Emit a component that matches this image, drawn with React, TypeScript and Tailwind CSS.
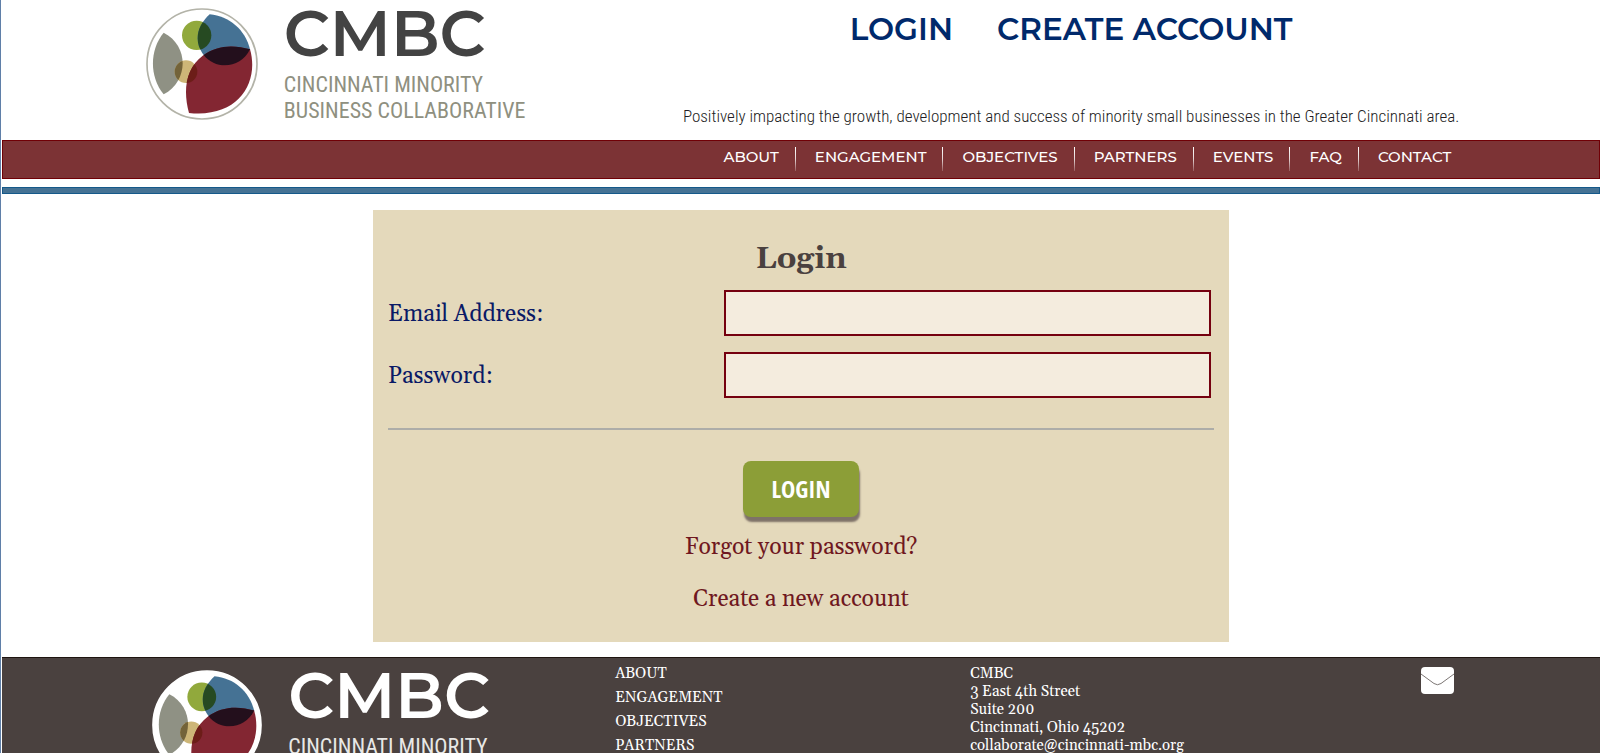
import React from "react";

const navItems = ["ABOUT", "ENGAGEMENT", "OBJECTIVES", "PARTNERS", "EVENTS", "FAQ", "CONTACT"];

function LogoMark({ className, ring }: { className: string; ring: string }) {
  return (
    <svg viewBox="45 24 336 336" className={className} aria-hidden="true">
      <defs>
        <clipPath id="blueLens">
          <path d="M236 43C295 48 343 90 357 148C330 205 255 212 218 165C188 125 196 80 236 43Z" />
        </clipPath>
        <clipPath id="greyLens">
          <path d="M98 98C175 137 173 243 98 283C55 230 55 150 98 98Z" />
        </clipPath>
        <clipPath id="redLens">
          <path d="M357 148C385 245 325 355 174 339C155 270 165 205 215 167C258 134 310 134 357 148Z" />
        </clipPath>
      </defs>
      <circle cx="213" cy="192" r="165" fill="#fff" stroke={ring} strokeWidth="5" />
      <path d="M98 98C175 137 173 243 98 283C55 230 55 150 98 98Z" fill="#8f9184" />
      <circle cx="197" cy="106" r="44" fill="#91a93c" />
      <circle cx="165" cy="215" r="34" fill="#cdb677" />
      <path d="M236 43C295 48 343 90 357 148C330 205 255 212 218 165C188 125 196 80 236 43Z" fill="#457294" />
      <path d="M357 148C385 245 325 355 174 339C155 270 165 205 215 167C258 134 310 134 357 148Z" fill="#832632" />
      <circle cx="197" cy="106" r="44" fill="#264a22" clipPath="url(#blueLens)" />
      <circle cx="165" cy="215" r="34" fill="#736339" clipPath="url(#greyLens)" />
      <circle cx="165" cy="215" r="34" fill="#6c1d18" clipPath="url(#redLens)" />
      <path
        d="M357 148C385 245 325 355 174 339C155 270 165 205 215 167C258 134 310 134 357 148Z"
        fill="#230f1c"
        clipPath="url(#blueLens)"
      />
    </svg>
  );
}

function Logo({ light = false }: { light?: boolean }) {
  return (
    <a href="#home" className="flex gap-[26px]">
      <LogoMark className={light ? "size-[110px] shrink-0" : "size-28 shrink-0"} ring={light ? "#fff" : "#b3b3a8"} />
      <span className="flex flex-col whitespace-nowrap">
        <span
          className={`font-['Montserrat','Lato',sans-serif] text-[64px] leading-[50px] font-semibold ${
            light ? "text-white" : "text-[#434343]"
          }`}
        >
          CMBC
        </span>
        <span
          className={`mt-3.5 font-['Roboto_Condensed','Roboto',sans-serif] text-[22px] leading-[26px] ${
            light ? "text-[#e8e8e6]" : "text-[#8f9080]"
          }`}
        >
          CINCINNATI MINORITY
          <br />
          BUSINESS COLLABORATIVE
        </span>
      </span>
    </a>
  );
}

function Field({ id, label, type }: { id: string; label: string; type: string }) {
  return (
    <div className="flex items-center justify-between pr-[3px]">
      <label htmlFor={id} className="pt-1 text-[23px] leading-8 text-[#0a1a66]">
        {label}
      </label>
      <input
        id={id}
        name={id}
        type={type}
        className="h-[46px] w-[487px] max-w-[60%] border-2 border-[#75000f] bg-[#f4ecde] px-3 text-xl outline-none"
      />
    </div>
  );
}

export default function App() {
  return (
    <div className="min-h-screen border-l border-[#5f7fa8] bg-white pl-px font-['Georgia','Gelasio','Liberation_Serif',serif]">
      <header>
        <div className="flex h-[140px] justify-between pt-2 pr-[8.8%] pl-[9%]">
          <Logo />
          <div className="flex flex-col items-center justify-between pb-2">
            <div className="flex gap-11 font-['Montserrat','Inter',sans-serif] text-[31px] leading-[42px] font-semibold text-[#00296b]">
              <a href="#login">LOGIN</a>
              <a href="#create">CREATE ACCOUNT</a>
            </div>
            <p className="font-['Roboto_Condensed','Roboto',sans-serif] text-[17px] leading-8 font-light whitespace-nowrap text-[#221c22]">
              Positively impacting the growth, development and success of minority small businesses in the Greater
              Cincinnati area.
            </p>
          </div>
        </div>
        <nav className="flex h-[39px] justify-end border border-[#700006] bg-[#7c3335] px-[9%] pt-1.5">
          <ul className="flex pr-1 font-['Montserrat','Inter',sans-serif] text-[15px] leading-5 font-medium text-white">
            {navItems.map((item, i) => (
              <li key={item} className="flex">
                {i > 0 && (
                  <span className="mr-[19px] ml-4 h-6 w-px bg-linear-to-b from-white via-white/80 to-white/20" />
                )}
                <a href={`#${item.toLowerCase()}`}>{item}</a>
              </li>
            ))}
          </ul>
        </nav>
        <div className="mt-2 h-[7px] border border-[#15598a] bg-[#457294]" />
      </header>

      <main className="pt-4 pb-[15px]">
        <form
          className="mx-auto w-full max-w-[856px] bg-[#e4d9bb] px-[15px] pt-[31px] pb-[26px]"
          onSubmit={(e) => e.preventDefault()}
        >
          <h1 className="mb-[13px] text-center text-[31px] leading-9 font-bold text-[#4a413f]">Login</h1>
          <div className="flex flex-col gap-4">
            <Field id="email" label="Email Address:" type="email" />
            <Field id="password" label="Password:" type="password" />
          </div>
          <hr className="mt-[30px] mb-[31px] border-t-2 border-[#adada8]" />
          <div className="flex flex-col items-center">
            <button
              type="submit"
              className="h-14 w-[116px] rounded-lg bg-[#8c9e37] font-['Open_Sans_Condensed','Roboto_Condensed',sans-serif] text-2xl font-bold text-white shadow-[1px_5px_2px_#7e7268]"
            >
              LOGIN
            </button>
            <a href="#forgot" className="mt-[15px] text-[23px] leading-8 text-[#6f1720]">
              Forgot your password?
            </a>
            <a href="#new" className="mt-5 text-[23px] leading-8 text-[#6f1720]">
              Create a new account
            </a>
          </div>
        </form>
      </main>

      <footer className="flex h-24 overflow-hidden border-t border-[#1e1410] bg-[#4a413f] pr-[9%] pl-[9.4%] text-[15px] text-white">
        <div className="w-[463px] shrink-0 pt-3">
          <Logo light />
        </div>
        <ul className="w-[355px] shrink-0 pt-1 leading-6">
          {navItems.map((item) => (
            <li key={item}>
              <a href={`#${item.toLowerCase()}`}>{item}</a>
            </li>
          ))}
        </ul>
        <address className="pt-[7px] leading-[18px] not-italic">
          CMBC
          <br />
          3 East 4th Street
          <br />
          Suite 200
          <br />
          Cincinnati, Ohio 45202
          <br />
          <a href="mailto:collaborate@cincinnati-mbc.org">collaborate@cincinnati-mbc.org</a>
        </address>
        <a href="mailto:collaborate@cincinnati-mbc.org" aria-label="Email us" className="mt-[9px] mr-0.5 ml-auto">
          <svg viewBox="0 0 33 27" className="h-[27px] w-[33px]" aria-hidden="true">
            <rect width="33" height="27" rx="4" fill="#fff" />
            <path d="M0 7L13 16.500Q16.500 19 20 16.500L33 7" fill="none" stroke="#7c7674" strokeWidth="1" />
          </svg>
        </a>
      </footer>
    </div>
  );
}
